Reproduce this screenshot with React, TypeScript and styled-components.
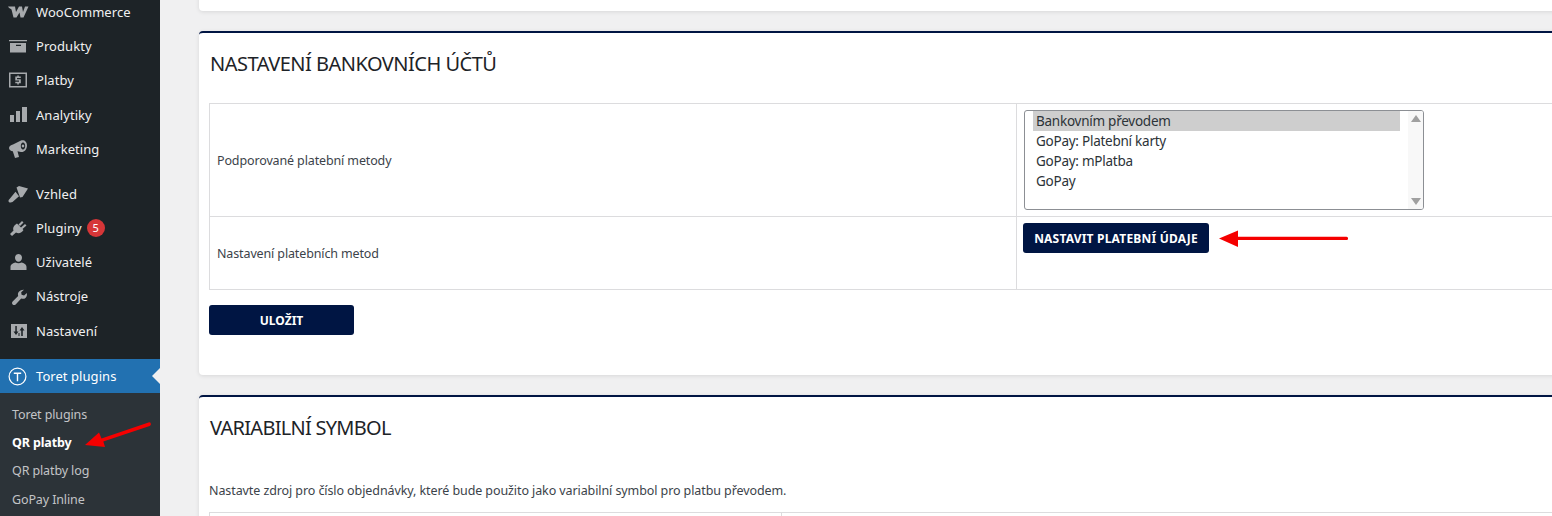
import React from "react";
import styled, { createGlobalStyle } from "styled-components";

const FONT = `"Noto Sans", "Open Sans", "Liberation Sans", sans-serif`;

const Global = createGlobalStyle`
  html, body { margin: 0; padding: 0; background: #f0f0f1; overflow: hidden; }
  * { box-sizing: border-box; }
  body { font-family: ${FONT}; }
`;

const Shell = styled.div`
  position: relative;
  display: flex;
  width: 1552px;
  height: 516px;
  overflow: hidden;
`;

const Sidebar = styled.nav`
  flex: 0 0 160px;
  height: 516px;
  background: #1d2327;
  overflow: hidden;
`;

const MenuList = styled.ul`
  list-style: none;
  margin: -5.2px 0 0;
  padding: 0;
`;

const MenuItem = styled.li<{ $gap?: number; $active?: boolean }>`
  display: flex;
  align-items: center;
  height: ${(p) => (p.$active ? "34px" : "34.25px")};
  margin-top: ${(p) => p.$gap ?? 0}px;
  padding-left: 7px;
  font-size: 13px;
  letter-spacing: 0.06px;
  color: ${(p) => (p.$active ? "#fff" : "#f0f0f1")};
  background: ${(p) => (p.$active ? "#2271b1" : "transparent")};
  position: relative;
`;

const IconSlot = styled.span<{ $active?: boolean }>`
  flex: 0 0 22px;
  width: 22px;
  height: 20px;
  margin-right: 7px;
  display: flex;
  align-items: center;
  justify-content: center;
  color: ${(p) => (p.$active ? "#fff" : "#a7aaad")};
`;

const Badge = styled.span`
  display: inline-flex;
  align-items: center;
  justify-content: center;
  width: 18px;
  height: 18px;
  margin-left: 5px;
  border-radius: 50%;
  background: #d63638;
  color: #fff;
  font-size: 11px;
`;

const ActiveNotch = styled.span`
  position: absolute;
  right: 0;
  top: 50%;
  margin-top: -8px;
  border: 8px solid transparent;
  border-right-color: #f0f0f1;
  border-left-width: 0;
`;

const SubMenu = styled.ul`
  list-style: none;
  margin: 0;
  padding: 7px 0 0;
  background: #2c3338;
  height: 140px;
`;

const SubItem = styled.li<{ $current?: boolean }>`
  display: flex;
  align-items: center;
  height: 28.4px;
  padding-left: 12px;
  font-size: 12.5px;
  letter-spacing: -0.12px;
  font-weight: ${(p) => (p.$current ? 700 : 400)};
  color: ${(p) => (p.$current ? "#fff" : "#c3c4c7")};
`;

const Main = styled.main`
  flex: 1;
  min-width: 0;
  padding: 0 0 0 39px;
  margin-top: -20px;
`;

const Card = styled.section<{ $accent?: boolean }>`
  margin: 0 -20px 20px 0;
  padding: 0 10px;
  background: #fff;
  border-radius: 4px;
  border-top: ${(p) => (p.$accent ? "2px solid #001543" : "0")};
  box-shadow: 0 1px 4px rgba(0, 0, 0, 0.1);
`;

const TopStub = styled(Card)`
  height: 31px;
`;

const SettingsCard = styled(Card)`
  height: 344px;
`;

const SymbolCard = styled(Card)`
  height: 200px;
`;

const Heading = styled.h2`
  margin: 0;
  padding-left: 1px;
  font-size: 20px;
  font-weight: 400;
  line-height: 28px;
  color: #1d2327;
  text-transform: uppercase;
`;

const SettingsHeading = styled(Heading)`
  padding-top: 17px;
  margin-bottom: 25px;
  letter-spacing: -0.5px;
`;

const SymbolHeading = styled(Heading)`
  padding-top: 17px;
  margin-bottom: 40px;
  letter-spacing: -0.72px;
`;

const Table = styled.table`
  border-collapse: collapse;
  width: 1360px;
  table-layout: fixed;
  font-size: 12.5px;
  letter-spacing: -0.13px;
  color: #3c434a;
`;

const Row = styled.tr<{ $h: number }>`
  height: ${(p) => p.$h}px;
`;

const Cell = styled.td<{ $w?: number; $top?: boolean }>`
  border: 1px solid #dcdcde;
  padding: ${(p) => (p.$top ? "6px" : "0 7px")};
  width: ${(p) => (p.$w ? `${p.$w}px` : "auto")};
  vertical-align: ${(p) => (p.$top ? "top" : "middle")};
`;

const ListBox = styled.div`
  display: flex;
  width: 400px;
  height: 100px;
  margin-left: 1px;
  border: 1px solid #8c8f94;
  border-radius: 3px;
  padding: 0;
  overflow: hidden;
`;

const Options = styled.ul`
  flex: 1;
  list-style: none;
  margin: 0;
  padding: 0 8px;
  font-size: 13.5px;
  letter-spacing: -0.25px;
  color: #2c3338;
`;

const Option = styled.li<{ $selected?: boolean }>`
  height: 20px;
  line-height: 20px;
  padding-left: 3px;
  background: ${(p) => (p.$selected ? "#cecece" : "transparent")};
`;

const ScrollTrack = styled.div`
  flex: 0 0 15px;
  display: flex;
  flex-direction: column;
  justify-content: space-between;
  align-items: center;
  padding: 4px 0;
  background: #f8f8f8;
`;

const ScrollArrow = styled.span<{ $down?: boolean }>`
  width: 0;
  height: 0;
  border-left: 5px solid transparent;
  border-right: 5px solid transparent;
  ${(p) =>
    p.$down ? "border-top: 7px solid #a0a0a0;" : "border-bottom: 7px solid #a0a0a0;"}
`;

const Button = styled.button`
  display: flex;
  align-items: center;
  justify-content: center;
  height: 30px;
  border: 0;
  border-radius: 3px;
  background: #001543;
  color: #fff;
  font-family: ${FONT};
  font-size: 12px;
  font-weight: 700;
  text-transform: uppercase;
  padding: 0;
`;

const SetupButton = styled(Button)`
  width: 186px;
  letter-spacing: 0.2px;
`;

const SaveButton = styled(Button)`
  width: 145px;
  margin-top: 15px;
`;

const Note = styled.p`
  margin: 0 0 12px;
  font-size: 12.5px;
  line-height: 18px;
  letter-spacing: -0.09px;
  color: #3c434a;
`;

const Annotation = styled.svg`
  position: absolute;
  left: 0;
  top: 0;
  pointer-events: none;
`;

const Ico = ({ children }: { children: React.ReactNode }) => (
  <svg width="20" height="20" viewBox="0 0 20 20" fill="currentColor">
    {children}
  </svg>
);

const icons: Record<string, React.ReactNode> = {
  woo: (
    <svg width="22" height="14" viewBox="0 0 22 14" fill="currentColor">
      <path d="M1 1.500H8L9 7L12 1.500H15L16 7L18 1.500H21.500L16.500 12.500H13.500L12.500 7.500L9.500 12.500H6.500L4.500 4.500C4 3.500 2 3.500 1 1.500z" />
    </svg>
  ),
  box: (
    <Ico>
      <path fillRule="evenodd" d="M1 4h18v1.300H1zM2 7h16v9.500H2zm6 1.700v1.200h5V8.700z" />
    </Ico>
  ),
  money: (
    <Ico>
      <path
        fillRule="evenodd"
        d="M1 2.500h18v15H1zM2.500 4v12h15V4zM9.300 5.500h1.500v1.100h2v1.500H9v1.200h3.800v4h-2v1.200H9.300v-1.200h-2v-1.500H11V10.600H7.300v-4h2z"
      />
    </Ico>
  ),
  bars: (
    <Ico>
      <path d="M2 10h4v7H2zM8 6h4v11H8zM14 2h5v15h-5z" />
    </Ico>
  ),
  mega: (
    <Ico>
      <path
        fillRule="evenodd"
        d="M1 9C1 7.200 3 6.200 5 5.500L13 1.500C16 .3 19 2.500 19 6.500C19 10.500 16 13.500 13 13L9.500 12.300L11 18L7 19L4.800 12.300C3 12.200 1 11 1 9zM15 3.500C13.800 3.500 12.800 5 12.800 7S13.800 10.500 15 10.500S17.200 9 17.200 7S16.200 3.500 15 3.500zM15 5.500a1.300 1.500 0 1 1-.01 0z"
      />
    </Ico>
  ),
  brush: (
    <Ico>
      <path d="M8.500 3.500L11 2L20 4.500L14.500 13L12 13.500zM7.500 7.800L11 12.300L4.500 18C3.300 18.800 .5 18.800 .5 17C.5 16 1 15.500 2 14.500z" />
    </Ico>
  ),
  plug: (
    <Ico>
      <path d="M9 5.500L15.500 12C14 15 10.500 16 8 14.500L4 18L2 16L5.500 12.500C4.500 10 6 7 9 5.500zM10.500 6.500L14 3L15.500 4.500L12 8zM13 9.500L17 6L18.500 7.500L14.500 11z" />
    </Ico>
  ),
  user: (
    <Ico>
      <path d="M10.500 2C12.500 2 14 3.700 14 5.800S12.500 9.800 10.500 9.800S7 7.900 7 5.800S8.500 2 10.500 2zM7.500 10.500C8.300 11 9.400 11.300 10.500 11.300S12.700 11 13.500 10.500C15.800 11 18.500 12.300 18.500 15V18H2.500V15C2.500 12.300 5.200 11 7.500 10.500z" />
    </Ico>
  ),
  wrench: (
    <Ico>
      <g transform="translate(1.700 2.300) scale(0.92)">
        <path d="M15.500 1.500l-3 2.700.4 2.800 2.700.9 3-2.700c.4 2.300 0 3.900-1.200 5-1.300 1.300-3 1.500-4.900 1L6.500 17.500c-1 1-2.400 1-3.300.1-.9-.9-.9-2.300 0-3.200L9.200 8.400c-.5-1.900-.3-3.600 1-4.900 1.200-1.200 3-2.200 5.300-2z" />
      </g>
    </Ico>
  ),
  sliders: (
    <Ico>
      <path
        fillRule="evenodd"
        d="M3 3h16v14H3zM7.300 5v5.500H5.500l2.500 3.500 2.500-3.500H8.800V5zM14 6l-2.500 3.500h1.700V15h1.600V9.500h1.700zM10.500 12v3h1v-3z"
      />
    </Ico>
  ),
  toret: (
    <svg width="20" height="20" viewBox="0 0 20 20" fill="none" stroke="currentColor">
      <circle cx="9.500" cy="10.500" r="8.400" strokeWidth="1.200" />
      <path d="M5.800 7.300h7.400M9.500 7.300v8" strokeWidth="1.400" />
    </svg>
  ),
};

const items: { key: string; label: string; gap?: number; badge?: string }[] = [
  { key: "woo", label: "WooCommerce" },
  { key: "box", label: "Produkty" },
  { key: "money", label: "Platby" },
  { key: "bars", label: "Analytiky" },
  { key: "mega", label: "Marketing" },
  { key: "brush", label: "Vzhled", gap: 10.5 },
  { key: "plug", label: "Pluginy", badge: "5" },
  { key: "user", label: "Uživatelé" },
  { key: "wrench", label: "Nástroje" },
  { key: "sliders", label: "Nastavení" },
];

const methods = ["Bankovním převodem", "GoPay: Platební karty", "GoPay: mPlatba", "GoPay"];
const subs = ["Toret plugins", "QR platby", "QR platby log", "GoPay Inline"];

export default function App() {
  return (
    <Shell>
      <Global />
      <Sidebar>
        <MenuList>
          {items.map((it) => (
            <MenuItem key={it.key} $gap={it.gap}>
              <IconSlot>{icons[it.key]}</IconSlot>
              {it.label}
              {it.badge && <Badge>{it.badge}</Badge>}
            </MenuItem>
          ))}
          <MenuItem $gap={11.2} $active>
            <IconSlot $active>{icons.toret}</IconSlot>
            Toret plugins
            <ActiveNotch />
          </MenuItem>
        </MenuList>
        <SubMenu>
          {subs.map((s) => (
            <SubItem key={s} $current={s === "QR platby"}>
              {s}
            </SubItem>
          ))}
        </SubMenu>
      </Sidebar>
      <Main>
        <TopStub />
        <SettingsCard $accent>
          <SettingsHeading>Nastavení bankovních účtů</SettingsHeading>
          <Table>
            <tbody>
              <Row $h={113}>
                <Cell $w={807}>Podporované platební metody</Cell>
                <Cell $top>
                  <ListBox>
                    <Options>
                      {methods.map((m, i) => (
                        <Option key={m} $selected={i === 0}>
                          {m}
                        </Option>
                      ))}
                    </Options>
                    <ScrollTrack>
                      <ScrollArrow />
                      <ScrollArrow $down />
                    </ScrollTrack>
                  </ListBox>
                </Cell>
              </Row>
              <Row $h={73}>
                <Cell>Nastavení platebních metod</Cell>
                <Cell $top>
                  <SetupButton>Nastavit platební údaje</SetupButton>
                </Cell>
              </Row>
            </tbody>
          </Table>
          <SaveButton>Uložit</SaveButton>
        </SettingsCard>
        <SymbolCard $accent>
          <SymbolHeading>Variabilní symbol</SymbolHeading>
          <Note>Nastavte zdroj pro číslo objednávky, které bude použito jako variabilní symbol pro platbu převodem.</Note>
          <Table>
            <tbody>
              <Row $h={40}>
                <Cell $w={572} />
                <Cell />
              </Row>
            </tbody>
          </Table>
        </SymbolCard>
      </Main>
      <Annotation width="1552" height="516" viewBox="0 0 1552 516">
        <path d="M1219 238.500L1238 230.500V236.800H1346.500a1.500 1.500 0 0 1 0 3.200H1238V247z" fill="#f50000" />
        <path d="M85 445L99 432.500L101.500 438.500L148.500 422.500a1.800 1.800 0 0 1 1.200 3.400L103.300 441.500L105 447z" fill="#f50000" />
      </Annotation>
    </Shell>
  );
}
